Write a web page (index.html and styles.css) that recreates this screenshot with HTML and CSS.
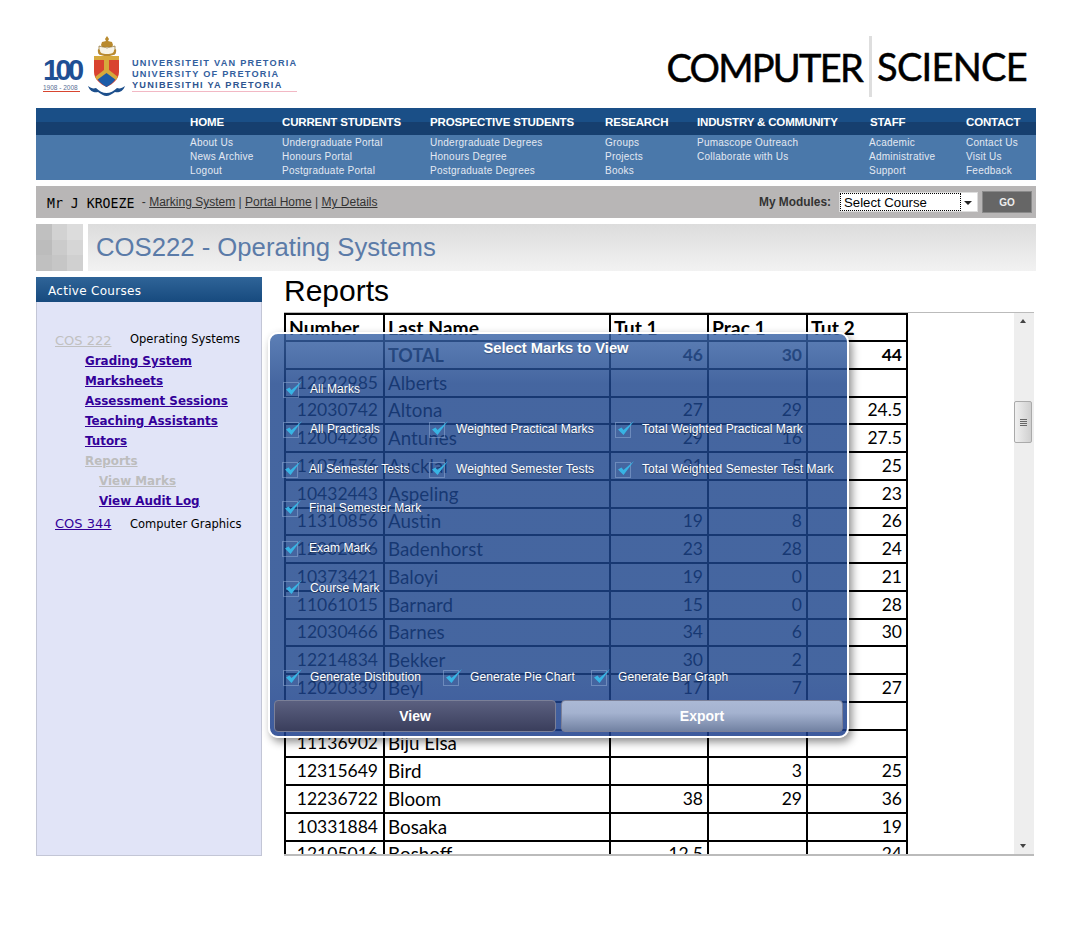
FILE: index.html
```html
<!DOCTYPE html>
<html lang="en">
<head>
    <meta charset="UTF-8">
    <meta name="viewport" content="width=device-width, initial-scale=1.0">
    <title>COS222 - Reports</title>
    <link rel="stylesheet" href="styles.css">
</head>
<body>
<div class="page">
    <header class="top">
        <div class="logo">
            <div class="hundred">
                <span class="hundred-num">100</span>
                <span class="hundred-years">1908 - 2008</span>
            </div>
            <svg class="crest" width="38" height="61" viewBox="0 0 38 61">
                <path d="M19 0l2 3-1 2 4 1 1 3-1 2h-10l-1-2 1-3 4-1-1-2z" fill="#b98a2e"/>
                <path d="M11 10c3 1 6 1 8 2 2-1 5-1 8-2v8c-3 0-6 1-8 2-2-1-5-2-8-2z" fill="#f7f3e6" stroke="#8a6a2a" stroke-width=".7"/>
                <path d="M10 13c-1 5 2 7 9 7s10-2 9-7l-2 1c0 3-2 4-7 4s-7-1-7-4z" fill="#b98a2e"/>
                <path d="M6 20h25v16c0 7-6 12-12.500 15-6.500-3-12.500-8-12.500-15z" fill="#d9432f"/>
                <path d="M6 20h25v4h-10v11h-5v-11h-10z" fill="#d6a93c"/>
                <path d="M9 42l9.500-8 9.500 8c-2 4-5 6-9.500 9-4.500-3-7.500-5-9.500-9z" fill="#1d5ca8"/>
                <path d="M7 41l11.500-9 11.500 9-2 3-9.500-7-9.500 7z" fill="#d6a93c"/>
                <path d="M0 50c3 2 5 3 8 2 3 3 7 5 10.500 5s7.500-2 10.500-5c3 1 5 0 8-2-2 6-7 7-10 6-3 2-6 4-8.500 4s-5.500-2-8.500-4c-3 1-8 0-10-6z" fill="#1d4f8c"/>
            </svg>
            <div class="logo-text">
                <span>UNIVERSITEIT VAN PRETORIA</span>
                <span>UNIVERSITY OF PRETORIA</span>
                <span class="logo-last">YUNIBESITHI YA PRETORIA</span>
            </div>
        </div>
        <div class="dept">
            <span class="dept-word dept-first">COMPUTER</span>
            <span class="dept-word dept-second">SCIENCE</span>
        </div>
    </header>

    <nav class="nav">
        <div class="nav-col nav-home">
            <div class="nav-head">Home</div>
            <div class="nav-links"><a>About Us</a><a>News Archive</a><a>Logout</a></div>
        </div>
        <div class="nav-col nav-current">
            <div class="nav-head">Current Students</div>
            <div class="nav-links"><a>Undergraduate Portal</a><a>Honours Portal</a><a>Postgraduate Portal</a></div>
        </div>
        <div class="nav-col nav-prospective">
            <div class="nav-head">Prospective Students</div>
            <div class="nav-links"><a>Undergraduate Degrees</a><a>Honours Degree</a><a>Postgraduate Degrees</a></div>
        </div>
        <div class="nav-col nav-research">
            <div class="nav-head">Research</div>
            <div class="nav-links"><a>Groups</a><a>Projects</a><a>Books</a></div>
        </div>
        <div class="nav-col nav-industry">
            <div class="nav-head">Industry &amp; Community</div>
            <div class="nav-links"><a>Pumascope Outreach</a><a>Collaborate with Us</a></div>
        </div>
        <div class="nav-col nav-staff">
            <div class="nav-head">Staff</div>
            <div class="nav-links"><a>Academic</a><a>Administrative</a><a>Support</a></div>
        </div>
        <div class="nav-col nav-contact">
            <div class="nav-head">Contact</div>
            <div class="nav-links"><a>Contact Us</a><a>Visit Us</a><a>Feedback</a></div>
        </div>
    </nav>

    <div class="userbar">
        <div class="user-left">
            <span class="user-name">Mr J KROEZE</span>
            <span class="user-links">- <a href="#">Marking System</a> | <a href="#">Portal Home</a> | <a href="#">My Details</a></span>
        </div>
        <form class="modules">
            <label class="modules-label" for="course-select">My Modules:</label>
            <div class="select-box">
                <select id="course-select"><option>Select Course</option></select>
            </div>
            <button class="go-btn" type="button">GO</button>
        </form>
    </div>

    <div class="titlebar">
        <div class="mosaic">
            <i class="t1"></i><i class="t2"></i><i class="t3"></i>
            <i class="t4"></i><i class="t5"></i><i class="t6"></i>
            <i class="t7"></i><i class="t8"></i><i class="t9"></i>
        </div>
        <h2 class="course-title">COS222 - Operating Systems</h2>
    </div>

    <div class="content">
        <aside class="sidebar">
            <div class="side-head">Active Courses</div>
            <div class="side-body">
                <div class="course-row"><a class="off" href="#">COS 222</a><span>Operating Systems</span></div>
                <ul class="side-links">
                    <li><a href="#">Grading System</a></li>
                    <li><a href="#">Marksheets</a></li>
                    <li><a href="#">Assessment Sessions</a></li>
                    <li><a href="#">Teaching Assistants</a></li>
                    <li><a href="#">Tutors</a></li>
                    <li><a class="off" href="#">Reports</a></li>
                    <li class="sub"><a class="off" href="#">View Marks</a></li>
                    <li class="sub"><a href="#">View Audit Log</a></li>
                </ul>
                <div class="course-row course-second"><a href="#">COS 344</a><span>Computer Graphics</span></div>
            </div>
        </aside>

        <main class="main">
            <h1 class="report-title">Reports</h1>
            <div class="report-panel">
                <div class="table-wrap">
                    <table class="marks">
                        <thead>
                            <tr><th>Number</th><th>Last Name</th><th>Tut 1</th><th>Prac 1</th><th>Tut 2</th></tr>
                        </thead>
                        <tbody>
                            <tr class="total"><td></td><td>TOTAL</td><td class="n">46</td><td class="n">30</td><td class="n">44</td></tr>
                            <tr><td>12222985</td><td>Alberts</td><td class="n"></td><td class="n"></td><td class="n"></td></tr>
                            <tr><td>12030742</td><td>Altona</td><td class="n">27</td><td class="n">29</td><td class="n">24.5</td></tr>
                            <tr><td>12004236</td><td>Antunes</td><td class="n">29</td><td class="n">16</td><td class="n">27.5</td></tr>
                            <tr><td>11071576</td><td>Aucklal</td><td class="n">21</td><td class="n">5</td><td class="n">25</td></tr>
                            <tr><td>10432443</td><td>Aspeling</td><td class="n"></td><td class="n"></td><td class="n">23</td></tr>
                            <tr><td>11310856</td><td>Austin</td><td class="n">19</td><td class="n">8</td><td class="n">26</td></tr>
                            <tr><td>12002306</td><td>Badenhorst</td><td class="n">23</td><td class="n">28</td><td class="n">24</td></tr>
                            <tr><td>10373421</td><td>Baloyi</td><td class="n">19</td><td class="n">0</td><td class="n">21</td></tr>
                            <tr><td>11061015</td><td>Barnard</td><td class="n">15</td><td class="n">0</td><td class="n">28</td></tr>
                            <tr><td>12030466</td><td>Barnes</td><td class="n">34</td><td class="n">6</td><td class="n">30</td></tr>
                            <tr><td>12214834</td><td>Bekker</td><td class="n">30</td><td class="n">2</td><td class="n"></td></tr>
                            <tr><td>12020339</td><td>Beyl</td><td class="n">17</td><td class="n">7</td><td class="n">27</td></tr>
                            <tr><td></td><td></td><td class="n"></td><td class="n"></td><td class="n"></td></tr>
                            <tr><td>11136902</td><td>Biju Elsa</td><td class="n"></td><td class="n"></td><td class="n"></td></tr>
                            <tr><td>12315649</td><td>Bird</td><td class="n"></td><td class="n">3</td><td class="n">25</td></tr>
                            <tr><td>12236722</td><td>Bloom</td><td class="n">38</td><td class="n">29</td><td class="n">36</td></tr>
                            <tr><td>10331884</td><td>Bosaka</td><td class="n"></td><td class="n"></td><td class="n">19</td></tr>
                            <tr><td>12105016</td><td>Boshoff</td><td class="n">12.5</td><td class="n"></td><td class="n">24</td></tr>
                        </tbody>
                    </table>
                </div>
                <div class="scrollbar">
                    <span class="arrow arrow-up"></span>
                    <span class="thumb"><i></i><i></i><i></i><i></i></span>
                    <span class="arrow arrow-down"></span>
                </div>
            </div>

            <div class="dialog">
                <div class="dialog-title">Select Marks to View</div>
                <div class="opt-row">
                    <label class="opt w1"><span class="box"><svg viewBox="0 0 20 14"><path d="M3 7.500L6.500 5.500 8.500 8 19 -1 8.500 13z"/></svg></span>All Marks</label>
                </div>
                <div class="opt-row">
                    <label class="opt w1"><span class="box"><svg viewBox="0 0 20 14"><path d="M3 7.500L6.500 5.500 8.500 8 19 -1 8.500 13z"/></svg></span>All Practicals</label>
                    <label class="opt w2"><span class="box"><svg viewBox="0 0 20 14"><path d="M3 7.500L6.500 5.500 8.500 8 19 -1 8.500 13z"/></svg></span>Weighted Practical Marks</label>
                    <label class="opt"><span class="box"><svg viewBox="0 0 20 14"><path d="M3 7.500L6.500 5.500 8.500 8 19 -1 8.500 13z"/></svg></span>Total Weighted Practical Mark</label>
                </div>
                <div class="opt-row">
                    <label class="opt w1 tight"><span class="box"><svg viewBox="0 0 20 14"><path d="M3 7.500L6.500 5.500 8.500 8 19 -1 8.500 13z"/></svg></span>All Semester Tests</label>
                    <label class="opt w2"><span class="box"><svg viewBox="0 0 20 14"><path d="M3 7.500L6.500 5.500 8.500 8 19 -1 8.500 13z"/></svg></span>Weighted Semester Tests</label>
                    <label class="opt"><span class="box"><svg viewBox="0 0 20 14"><path d="M3 7.500L6.500 5.500 8.500 8 19 -1 8.500 13z"/></svg></span>Total Weighted Semester Test Mark</label>
                </div>
                <div class="opt-row row-up">
                    <label class="opt tight"><span class="box"><svg viewBox="0 0 20 14"><path d="M3 7.500L6.500 5.500 8.500 8 19 -1 8.500 13z"/></svg></span>Final Semester Mark</label>
                </div>
                <div class="opt-row row-up">
                    <label class="opt tight"><span class="box"><svg viewBox="0 0 20 14"><path d="M3 7.500L6.500 5.500 8.500 8 19 -1 8.500 13z"/></svg></span>Exam Mark</label>
                </div>
                <div class="opt-row row-up">
                    <label class="opt"><span class="box"><svg viewBox="0 0 20 14"><path d="M3 7.500L6.500 5.500 8.500 8 19 -1 8.500 13z"/></svg></span>Course Mark</label>
                </div>
                <div class="opt-row row-generate">
                    <label class="opt w3"><span class="box"><svg viewBox="0 0 20 14"><path d="M3 7.500L6.500 5.500 8.500 8 19 -1 8.500 13z"/></svg></span>Generate Distibution</label>
                    <label class="opt w4"><span class="box"><svg viewBox="0 0 20 14"><path d="M3 7.500L6.500 5.500 8.500 8 19 -1 8.500 13z"/></svg></span>Generate Pie Chart</label>
                    <label class="opt"><span class="box"><svg viewBox="0 0 20 14"><path d="M3 7.500L6.500 5.500 8.500 8 19 -1 8.500 13z"/></svg></span>Generate Bar Graph</label>
                </div>
                <div class="dialog-btns">
                    <button class="btn btn-view" type="button">View</button>
                    <button class="btn btn-export" type="button">Export</button>
                </div>
            </div>
        </main>
    </div>
</div>
</body>
</html>
```

FILE: styles.css
```css
html, body {
    margin: 0;
    padding: 0;
    background-color: white;
}
body {
    font-family: "Liberation Sans", Arial, sans-serif;
    overflow: hidden;
}
.page {
    width: 1000px;
    margin-left: 36px;
    height: 928px;
}

/* header */
.top {
    height: 108px;
    display: flex;
    justify-content: space-between;
}
.logo {
    display: flex;
    padding: 36px 0 0 7px;
}
.hundred {
    width: 37px;
    margin-top: 21px;
    display: flex;
    flex-direction: column;
}
.hundred-num {
    font-size: 29px;
    line-height: 27px;
    font-weight: bold;
    letter-spacing: -3.6px;
    color: #1f4f94;
}
.hundred-years {
    font-size: 6.5px;
    line-height: 7px;
    color: #5a6f95;
    border-bottom: 1px solid #d8452f;
    white-space: nowrap;
}
.crest {
    margin-left: 8px;
    flex: none;
}
.logo-text {
    margin: 22px 0 0 6px;
    display: flex;
    flex-direction: column;
    font-size: 9.2px;
    line-height: 11px;
    font-weight: bold;
    letter-spacing: 1.24px;
    color: #33609e;
    white-space: nowrap;
}
.logo-last {
    color: #2e5590;
    border-bottom: 1px solid #f2b8c4;
    line-height: 11px;
}
.dept {
    display: flex;
    align-items: center;
    height: 61px;
    margin: 36px 9px 0 0;
    font-family: Lato, sans-serif;
    font-size: 38px;
    color: black;
    -webkit-text-stroke: .5px black;
}
.dept-first {
    letter-spacing: -1.75px;
}
.dept-second {
    letter-spacing: -.7px;
    border-left: 3px solid #dedede;
    margin-left: 7px;
    padding-left: 5px;
    height: 61px;
    line-height: 61px;
}

/* nav */
.nav {
    height: 72px;
    display: flex;
    padding-left: 154px;
    background: linear-gradient(to bottom, #1a4f87 0, #1a4f87 14px, #163f6f 14px, #163f6f 27px, #4a78aa 27px);
}
.nav-head {
    height: 27px;
    line-height: 28px;
    font-size: 11.5px;
    letter-spacing: -.15px;
    font-weight: bold;
    text-transform: uppercase;
    color: white;
    white-space: nowrap;
}
.nav-links {
    padding-top: 1px;
}
.nav-links a {
    display: block;
    font-size: 10px;
    line-height: 14px;
    letter-spacing: .25px;
    color: #e4e9f2;
    white-space: nowrap;
}
.nav-home { width: 92px; }
.nav-current { width: 148px; }
.nav-prospective { width: 175px; }
.nav-research { width: 92px; }
.nav-industry { width: 173px; }
.nav-staff { width: 96px; }
.nav-staff .nav-links {
    margin-left: -1px;
}

/* user bar */
.userbar {
    margin-top: 6px;
    height: 32px;
    background-color: #b8b6b6;
    display: flex;
    justify-content: space-between;
    align-items: center;
    padding: 0 4px 0 11px;
}
.user-name {
    font-family: "DejaVu Sans Mono", monospace;
    font-size: 13.2px;
    color: black;
    position: relative;
    top: 1px;
}
.user-links {
    margin-left: 3px;
    font-size: 12px;
    color: #333;
    position: relative;
    top: -1px;
}
.user-links a {
    color: #333;
}
.modules {
    display: flex;
    align-items: center;
    margin: 0;
}
.modules-label {
    font-size: 11.9px;
    font-weight: bold;
    color: #333;
    margin-right: 8px;
}
.select-box {
    width: 139px;
    height: 20px;
    box-sizing: border-box;
    background-color: white;
    border: 1px solid #ddd;
    position: relative;
}
.select-box::after {
    content: "";
    position: absolute;
    right: 5px;
    top: 8px;
    border: 4px solid transparent;
    border-top: 4px solid #222;
    border-bottom: 0;
}
.select-box select {
    appearance: none;
    display: block;
    width: 121px;
    height: 18px;
    border: 1px dotted black;
    background: white;
    padding: 0 0 0 3px;
    margin: 0;
    font-family: "Liberation Sans", Arial, sans-serif;
    font-size: 13.2px;
    color: black;
    border-radius: 0;
}
.go-btn {
    width: 50px;
    height: 22px;
    margin-left: 4px;
    padding: 0;
    background-color: #666;
    border: 1px solid #8a8a8a;
    color: #eee;
    font-family: "Liberation Sans", Arial, sans-serif;
    font-size: 10px;
    font-weight: bold;
}

/* course title */
.titlebar {
    margin-top: 6px;
    height: 47px;
    display: flex;
}
.mosaic {
    width: 47px;
    height: 47px;
    display: grid;
    grid-template-columns: repeat(3, 1fr);
    grid-template-rows: repeat(3, 1fr);
    margin-right: 5px;
}
.t1 { background-color: #c0c0c0; }
.t2 { background-color: #d2d2d2; }
.t3 { background-color: #dcdcdc; }
.t4 { background-color: #bcbcbc; }
.t5 { background-color: #cbcbcb; }
.t6 { background-color: #d6d6d6; }
.t7 { background-color: #c0c0c0; }
.t8 { background-color: #c6c6c6; }
.t9 { background-color: #d0d0d0; }
.course-title {
    flex: 1;
    margin: 0;
    padding-left: 8px;
    font-size: 25.7px;
    line-height: 47px;
    font-weight: normal;
    color: #5b7ba8;
    background: linear-gradient(to bottom, #dcdcdc, #f2f2f2);
}

/* sidebar */
.content {
    margin-top: 6px;
    display: flex;
}
.sidebar {
    width: 226px;
    height: 579px;
    box-sizing: border-box;
    background-color: #e1e4f7;
    border: 1px solid #c3c6d6;
    border-top: 0;
    font-family: "DejaVu Sans", sans-serif;
    font-size: 11.5px;
}
.side-head {
    height: 25px;
    line-height: 28px;
    margin: 0 -1px;
    padding-left: 12px;
    background: linear-gradient(to bottom, #2f6498, #174a7e);
    color: white;
    font-size: 12px;
    letter-spacing: .3px;
}
.side-body {
    padding: 29px 0 0 18px;
}
.course-row {
    display: flex;
    align-items: baseline;
    height: 20px;
    line-height: 20px;
    color: black;
}
.course-row span {
    position: relative;
    top: -2px;
}
.course-row a {
    width: 75px;
    font-size: 13px;
    font-weight: normal;
    color: #330099;
}
.course-row a.off {
    color: #c0c0c0;
}
.course-second {
    margin-top: 3px;
}
.course-second span {
    top: 0;
}
.side-links {
    list-style: none;
    margin: 0;
    padding: 0 0 0 30px;
}
.side-links li {
    height: 20px;
    line-height: 20px;
}
.side-links a {
    font-size: 11.9px;
    font-weight: bold;
    color: #330099;
}
.side-links a.off {
    color: #bdbdbd;
}
.side-links .sub {
    padding-left: 14px;
}

/* main column */
.main {
    position: relative;
    margin-left: 22px;
    width: 750px;
}
.report-title {
    margin: 0;
    height: 35px;
    font-size: 30px;
    line-height: 28px;
    font-weight: normal;
    color: black;
}
.report-panel {
    height: 544px;
    box-sizing: border-box;
    border-top: 1px solid #bbb;
    border-bottom: 2px solid #bbb;
    display: flex;
    justify-content: space-between;
}
.table-wrap {
    overflow: hidden;
}
.marks {
    border-collapse: collapse;
    table-layout: fixed;
    width: 622px;
    font-family: Lato, sans-serif;
    font-size: 17.5px;
    color: black;
}
.marks th, .marks td {
    border: 2px solid black;
    height: 27.75px;
    padding: 0 4px 0 3px;
    box-sizing: border-box;
    line-height: 20px;
    text-align: left;
    white-space: nowrap;
}
.marks th {
    height: 27px;
    font-size: 19.3px;
}
.marks th:nth-child(1) { width: 99px; }
.marks th:nth-child(2) { width: 226px; }
.marks th:nth-child(3) { width: 98px; }
.marks th:nth-child(4) { width: 99px; }
.marks th:nth-child(5) { width: 100px; }
.marks td:first-child {
    text-align: right;
    padding-right: 5px;
}
.marks td:nth-child(2) {
    font-size: 18.8px;
}
.marks .n {
    text-align: right;
}
.total td {
    font-weight: bold;
}
.marks .total td:nth-child(2) {
    font-size: 18px;
}

/* scrollbar */
.scrollbar {
    width: 20px;
    background-color: #eeeeee;
    position: relative;
}
.arrow {
    position: absolute;
    left: 6px;
    border: 3px solid transparent;
}
.arrow-up {
    top: 6px;
    border-top: 0;
    border-bottom: 4px solid #444;
}
.arrow-down {
    bottom: 6px;
    border-bottom: 0;
    border-top: 4px solid #444;
}
.thumb {
    position: absolute;
    top: 88px;
    left: 0;
    width: 18px;
    height: 42px;
    box-sizing: border-box;
    border: 1px solid #aaa;
    border-radius: 2px;
    background: linear-gradient(to right, #f0f0f0, #cfcfcf);
    display: flex;
    flex-direction: column;
    justify-content: center;
    align-items: center;
    gap: 1px;
}
.thumb i {
    width: 7px;
    height: 1px;
    background-color: #666;
}

/* marks dialog */
.dialog {
    position: absolute;
    left: -16px;
    top: 55px;
    width: 581px;
    height: 406px;
    box-sizing: border-box;
    border: 2px solid white;
    border-radius: 10px;
    background: linear-gradient(to bottom, rgba(56, 98, 165, .82), rgba(28, 68, 139, .82) 50px, rgba(28, 68, 139, .82) 340px, rgba(28, 62, 140, .85));
    box-shadow: 3px 4px 8px rgba(0, 0, 0, .45);
    color: white;
    font-size: 12px;
}
.dialog-title {
    height: 34.5px;
    line-height: 28px;
    padding-right: 5px;
    text-align: center;
    font-size: 14.7px;
    font-weight: bold;
    text-shadow: 0 1px 1px rgba(0, 0, 0, .3);
}
.opt-row {
    height: 40px;
    display: flex;
    align-items: center;
    padding-left: 13px;
}
.row-up {
    position: relative;
    top: -1px;
}
.row-generate {
    margin-top: 48.5px;
}
.opt {
    display: flex;
    align-items: center;
    gap: 11px;
    letter-spacing: .08px;
    white-space: nowrap;
    text-shadow: 0 1px 1px rgba(0, 0, 0, .4);
}
.tight {
    margin-left: -1px;
}
.w1 { width: 146px; }
.w1.tight { width: 147px; }
.w2 { width: 186px; }
.w3 { width: 160px; }
.w4 { width: 148px; }
.box {
    flex: none;
    width: 16px;
    height: 16px;
    box-sizing: border-box;
    margin-top: 2px;
    border: 1px solid rgba(150, 175, 215, .5);
}
.box svg {
    display: block;
    width: 20px;
    height: 14px;
    overflow: visible;
    fill: #38b4e4;
    margin: -1px 0 0 -1px;
}
.dialog-btns {
    display: flex;
    gap: 5px;
    padding: 3px 4px 0;
}
.btn {
    flex: 1;
    height: 32px;
    padding: 0;
    border: 1px solid #7b8098;
    border-radius: 4px;
    color: white;
    font-family: "Liberation Sans", Arial, sans-serif;
    font-size: 14px;
    font-weight: bold;
}
.btn-view {
    background: linear-gradient(to bottom, #5b6080, #3a3e5c);
}
.btn-export {
    background: linear-gradient(to bottom, #abb9d5, #a4b2cf 40%, #7282a2);
}
```
